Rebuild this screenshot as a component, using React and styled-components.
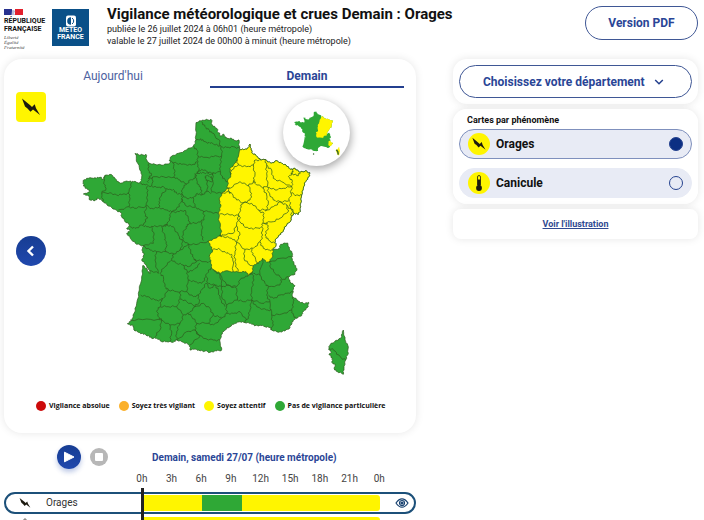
import { useState } from 'react'
import styled, { createGlobalStyle } from 'styled-components'

const GREEN = '#2fa836'
const YELLOW = '#fff500'

/* map outlines, three units to one pixel */
const COUNTRY = '348,38 360,32 375,31 393,28 397,45 410,55 415,68 423,78 430,72 440,85 455,85 465,92 477,90 479,118 495,118 503,115 510,102 513,120 518,130 530,138 543,150 555,148 573,160 590,152 605,160 618,165 630,178 645,175 660,187 675,183 689,188 687,200 677,215 670,235 665,255 662,280 660,300 655,313 643,310 635,318 633,330 620,345 610,360 602,373 585,390 588,405 578,420 598,415 602,403 623,399 628,417 638,433 635,443 642,460 650,475 645,493 625,500 630,515 645,527 638,540 638,560 655,573 670,580 686,577 682,593 670,605 665,617 648,625 635,637 630,653 615,663 595,667 575,660 570,653 555,650 540,645 525,648 512,640 495,638 480,635 465,640 450,650 435,660 423,675 420,695 425,720 410,723 390,727 375,723 360,723 345,717 330,720 328,705 310,697 290,690 280,697 260,695 245,695 230,685 215,685 205,677 190,673 175,667 162,660 160,647 142,641 155,630 162,610 170,580 178,540 185,500 188,467 200,475 208,490 210,487 205,475 195,463 185,450 192,435 185,420 190,407 170,403 155,390 140,370 150,362 140,355 150,345 135,335 125,320 123,308 105,298 85,288 70,275 55,265 45,272 30,270 25,258 10,252 30,245 20,235 10,228 9,212 25,205 45,203 60,202 70,208 75,196 95,194 105,205 120,220 135,215 150,213 160,215 180,218 185,205 183,185 173,160 165,130 180,136 198,133 200,150 207,160 225,163 250,166 270,158 268,150 275,138 295,130 320,120 340,108 348,90 347,60'
const EAST = '479,118 495,118 503,115 510,102 513,120 518,130 530,138 543,150 555,148 573,160 590,152 605,160 618,165 630,178 645,175 660,187 675,183 689,188 687,200 677,215 670,235 665,255 662,280 660,300 655,313 643,310 635,318 633,330 620,345 610,360 602,373 585,390 588,405 578,420 578,435 570,455 560,457 548,445 535,460 520,467 517,485 505,497 498,485 480,487 460,485 435,483 420,490 402,482 395,475 392,455 388,440 398,420 392,410 385,393 405,385 423,376 423,360 418,335 415,310 422,290 418,270 425,250 443,235 443,215 452,195 450,175 465,160 475,140'
const CORSICA = '790,660 795,690 803,705 805,730 797,750 792,775 790,793 772,785 763,777 765,765 755,757 758,745 748,735 753,725 746,717 750,705 765,693 782,685 787,665'

const BORDERS = [
  // north and Paris area
  '365,35 375,50 387,60 395,68 415,88 423,108',
  '347,92 362,86 375,95 390,100 410,103 423,110 440,112 460,110 479,115',
  '340,108 350,120 355,138 375,142 400,140 425,138 423,110',
  '425,138 422,160 420,180 428,205 443,215',
  '355,138 352,160 356,182 375,180 395,190 420,185',
  '270,152 290,160 310,162 335,165 352,155',
  '278,158 284,180 282,200 300,210 320,222 330,210 345,205 350,190 356,182',
  '350,188 365,190 380,188 400,195',
  '345,190 350,210 358,230 365,240 365,255 380,245 382,215 376,205 378,198 395,200 398,212 382,215',
  '400,187 398,212 395,245 425,250',
  '320,222 308,235 305,252 320,265 340,262 352,250 365,255',
  '340,262 345,290 360,300 385,305 415,310',
  '380,245 395,248',
  // Normandy, Brittany
  '207,160 205,180 215,195 205,205 205,218',
  '205,205 225,200 250,200 282,202',
  '180,218 195,225 215,228 235,232 250,230 265,240 280,238 290,250 305,252',
  '218,200 215,228',
  '157,215 147,245 150,265 147,290',
  '75,196 72,215 78,235 65,250 70,275',
  '65,250 90,248 110,255 130,252 147,250',
  '202,228 203,255 198,288',
  '115,300 147,290 170,295 198,288 215,295 237,292 260,300 275,305 298,290 305,265 305,252',
  '258,238 245,255 237,275 237,292',
  '198,290 195,310 202,325 190,345',
  '275,305 268,325 262,345 250,350',
  '150,350 165,355 185,345 200,350 220,350 235,348 262,345 280,350 295,375 308,395',
  '275,305 298,305 315,300 325,325 330,340 318,350 310,370 308,390',
  '305,265 315,285 345,292',
  '372,303 372,330 350,340 328,340',
  '366,334 365,370 370,392',
  '308,390 325,402 355,402 385,393',
  // west and south-west
  '215,350 222,375 220,400 190,407 210,420 230,425 258,425',
  '245,349 255,380 258,400 258,425 282,432 300,420 308,395',
  '230,425 225,450 235,490 208,482',
  '282,432 275,450 255,470 240,490 250,500 255,530 265,540',
  '300,420 325,402 332,425 342,445 350,455 325,470 310,465 290,460 275,450',
  '342,448 375,455 392,455',
  '310,465 322,485 325,510 320,545 290,545 265,540 250,565 245,570',
  '322,485 340,480 360,460',
  '325,510 345,515 365,520 378,500 385,480 395,475',
  '182,555 205,560 225,570 245,570 240,590 232,600 235,620 245,630',
  '150,630 200,627 245,630 270,645 300,640 310,615 290,590 265,590 240,590',
  '290,590 300,565 300,545',
  '245,630 240,660 225,680',
  '270,645 275,670 270,695',
  '300,640 290,665 290,690 320,665 345,660 360,680 330,705',
  '310,615 325,610 345,590 320,575 300,567',
  '320,545 340,560 355,555 358,575 345,590 370,580 390,595 400,615 385,640 350,640 335,620 325,610',
  '355,555 365,540 378,520 390,535 405,525 415,540 420,565 435,590',
  '350,640 345,660 370,685 400,690 420,690',
  '385,640 400,645 425,625 440,610 460,610 480,605 500,630',
  '400,615 425,622',
  '378,500 385,520 405,525 425,530 420,495 402,482',
  '425,530 445,525 470,535 472,570 440,585 425,560 425,530',
  '440,585 440,610',
  // south-east
  '420,492 440,525 470,530 480,510 497,498 517,490',
  '517,485 522,510 515,540 515,570 490,575 472,570',
  '520,490 540,495 555,520 565,530 560,555 570,575 545,580 515,570 510,600 505,620 495,638',
  '548,445 540,495',
  '565,530 600,525 605,505 585,490 570,470 570,455 600,445 635,440',
  '605,510 625,500',
  '565,555 580,565 600,555 620,550 638,545',
  '570,575 575,615 605,612 635,600 640,580 638,560',
  '515,570 530,590 560,600 575,600',
  '575,615 578,640 575,660',
  '635,600 640,615 648,625',
  // yellow departments
  '470,150 475,165 500,170 520,165 525,150 543,150',
  '475,165 455,180 450,195',
  '520,165 525,195 520,215 505,228 480,215 450,235 443,235',
  '555,148 560,165 560,190 563,225 550,235 525,220 520,212',
  '560,165 575,180 580,205 605,215 635,230 637,215 625,200 640,185 635,178',
  '632,190 650,197 662,187',
  '635,230 610,235 585,240 563,232 565,245 580,270 600,275 628,272 633,250 635,230',
  '633,250 650,255 665,255',
  '628,275 632,290 643,310',
  '425,250 445,245 455,250 470,270 490,278 510,270 515,250 505,228',
  '550,235 560,255 565,280 560,300 535,300 515,280 490,278 480,295 477,318 450,315 418,312',
  '445,235 450,250',
  '535,300 552,310 550,335 545,350 520,358 495,352 480,335 477,318 470,345 460,370 430,375 418,376',
  '555,303 580,290 600,275 620,285 625,305 600,325 580,335 550,340',
  '620,285 635,300 635,318',
  '550,340 562,340 565,355 555,375 565,390 585,400',
  '470,347 480,375 470,397 495,418 520,415 540,395 548,375 545,350',
  '470,397 455,385 430,380 418,376',
  '398,420 415,415 440,430 455,433 458,450 460,485',
  '470,397 465,425 465,455 475,485',
  '495,418 492,445 510,465 520,467',
  '515,415 518,435 535,460',
  '540,395 550,415 565,420 578,420',
  '748,715 765,723 780,740 797,750',
]

// splits each segment in four with a small alternating offset, so that limits look surveyed
const rugged = (points, size) => {
  const list = points.split(' ').map((p) => p.split(',').map(Number))
  const out = []
  for (let i = 0; i < list.length - 1; i++) {
    const [x1, y1] = list[i]
    const [x2, y2] = list[i + 1]
    const len = Math.hypot(x2 - x1, y2 - y1) || 1
    out.push([x1, y1])
    for (let k = 1; k < 4; k++) {
      const side = ((x1 + y2 + k * 7) % 5) - 2
      const off = (side * size) / 2
      out.push([
        Math.round(x1 + ((x2 - x1) * k) / 4 - ((y2 - y1) / len) * off),
        Math.round(y1 + ((y2 - y1) * k) / 4 + ((x2 - x1) / len) * off),
      ])
    }
  }
  out.push(list[list.length - 1])
  return out.join(' ')
}

const FranceMap = () => (
  <MapSvg viewBox="0 0 810 810" role="img" aria-label="Carte de vigilance">
    <g stroke="#2f5f1f" strokeWidth="2.200" strokeLinejoin="round">
      <polygon points={rugged(COUNTRY, 2)} fill={GREEN} />
      <polygon points={rugged(EAST, 2)} fill={YELLOW} />
      <polygon points={rugged(CORSICA, 2)} fill={GREEN} />
      {BORDERS.map((b) => (
        <polyline key={b} points={rugged(b, 3)} fill="none" />
      ))}
    </g>
  </MapSvg>
)

const MiniMap = () => (
  <svg width="46" height="46" viewBox="0 0 810 810" aria-hidden="true">
    <polygon points={COUNTRY} fill={GREEN} />
    <polygon points={EAST} fill={YELLOW} />
    <polygon points="610,545 638,540 655,573 686,577 665,617 635,640 605,620" fill={YELLOW} />
    <polygon points={CORSICA} fill={YELLOW} stroke={YELLOW} strokeWidth="12" />
    <path d="M745 700l25 30 10 55" stroke="#35642a" strokeWidth="26" fill="none" />
    <circle cx="345" cy="775" r="13" fill="#35642a" />
  </svg>
)

const Bolt = ({ size }) => (
  <svg width={size} height={size} viewBox="0 0 30 30" aria-hidden="true">
    <path d="M6 6.500l8.500 7 1.500 1.500 2.700-2.700 1.300 4L24 23l-7-5.500-2.500 2.300-3-3.300-2.500-2z" fill="#1c1a10" />
  </svg>
)

const Thermometer = ({ size }) => (
  <svg width={size} height={size} viewBox="0 0 22 22" aria-hidden="true">
    <path d="M9.500 13V5a1.500 1.500 0 0 1 3 0v8" fill="none" stroke="#1c1a10" strokeWidth="0.800" />
    <path d="M9.600 7.500h2.800v7H9.600z" fill="#1c1a10" />
    <circle cx="11" cy="16" r="2.900" fill="#1c1a10" />
  </svg>
)

const Eye = () => (
  <svg width="14" height="12" viewBox="0 0 14 12" fill="none" stroke="#17416f" strokeWidth="1.200" aria-hidden="true">
    <path d="M1 6c2-3 4-4.200 6-4.200S11 3 13 6c-2 3-4 4.200-6 4.200S3 9 1 6z" />
    <circle cx="7" cy="6" r="2.500" />
    <circle cx="7" cy="6" r="1" fill="#17416f" />
  </svg>
)

const levels = [
  ['Vigilance absolue', '#cc0a0a'],
  ['Soyez très vigilant', '#fbb02a'],
  ['Soyez attentif', YELLOW],
  ['Pas de vigilance particulière', GREEN],
]
const hours = ['0h', '3h', '6h', '9h', '12h', '15h', '18h', '21h', '0h']

const App = () => {
  const [day, setDay] = useState('Demain')
  const [risk, setRisk] = useState('Orages')

  return (
    <>
      <GlobalStyle />
      <Header>
        <Republic>
          <svg width="19" height="6" viewBox="0 0 19 6" aria-hidden="true">
            <path d="M0 0h8v6H0z" fill="#28318f" />
            <path d="M11 0h8v6h-8z" fill="#e3202c" />
            <path d="M8 1.500c1.500-1 3 0 3.200 1.300L10 4l1 2H7.500z" fill="#b9bdd8" />
          </svg>
          <strong>RÉPUBLIQUE<br />FRANÇAISE</strong>
          <em>Liberté<br />Égalité<br />Fraternité</em>
        </Republic>
        <MeteoLogo>
          <svg width="12" height="12" viewBox="0 0 12 12" aria-hidden="true">
            <rect x="1" y="0.500" width="10" height="11" rx="2" fill="#fff" />
            <path d="M6 2.200a3.800 3.800 0 0 0 0 7.600z" fill="#0a5088" />
            <path d="M7 3a3.500 3.500 0 0 1 0 6" fill="none" stroke="#0a5088" />
          </svg>
          METEO<br />FRANCE
        </MeteoLogo>
        <Titles>
          <h1>Vigilance météorologique et crues Demain : Orages</h1>
          <p>publiée le 26 juillet 2024 à 06h01 (heure métropole)</p>
          <p>valable le 27 juillet 2024 de 00h00 à minuit (heure métropole)</p>
        </Titles>
        <PdfButton type="button">Version PDF</PdfButton>
      </Header>

      <Layout>
        <main>
          <MapCard>
            <Tabs>
              {["Aujourd'hui", 'Demain'].map((name) => (
                <Tab key={name} type="button" $active={day === name} onClick={() => setDay(name)}>
                  {name}
                </Tab>
              ))}
            </Tabs>
            <MapArea>
              <Side>
                <RiskBadge><Bolt size={30} /></RiskBadge>
                <PrevButton type="button" aria-label="Carte précédente">
                  <svg width="14" height="14" viewBox="0 0 14 14" aria-hidden="true">
                    <path d="M9 2.500L4.500 7 9 11.500" fill="none" stroke="#fff" strokeWidth="2.400" />
                  </svg>
                </PrevButton>
              </Side>
              <FranceMap />
              <MiniButton type="button" aria-label="Vue générale"><MiniMap /></MiniButton>
            </MapArea>
            <Legend>
              {levels.map(([label, color]) => (
                <li key={label}><Dot $color={color} />{label}</li>
              ))}
            </Legend>
          </MapCard>

          <PlayerBar>
            <PlayButton type="button" aria-label="Lecture">
              <svg width="12" height="12" viewBox="0 0 12 12" aria-hidden="true">
                <path d="M1.500 1.200v9.600L11 6z" fill="#fff" stroke="#fff" strokeLinejoin="round" />
              </svg>
            </PlayButton>
            <StopButton type="button" aria-label="Arrêt" />
            <DayTitle>Demain, samedi 27/07 (heure métropole)</DayTitle>
          </PlayerBar>
          <Hours>
            {hours.map((h, i) => <span key={i}>{h}</span>)}
          </Hours>
          <Timeline>
            <Row $selected>
              <Bolt size={18} />
              <span>Orages</span>
              <Bar>
                <Slot $hours={6} $color={YELLOW} />
                <Slot $hours={4} $color={GREEN} />
                <Slot $hours={14} $color={YELLOW} />
              </Bar>
              <EyeButton type="button" aria-label="Afficher les orages"><Eye /></EyeButton>
            </Row>
            <Row>
              <Thermometer size={18} />
              <span>Canicule</span>
              <Bar><Slot $hours={24} $color={YELLOW} /></Bar>
              <EyeButton type="button" aria-label="Afficher la canicule"><Eye /></EyeButton>
            </Row>
            <Cursor />
          </Timeline>
        </main>

        <Aside>
          <Panel>
            <SelectWrap>
              <select aria-label="Département" defaultValue="">
                <option value="">Choisissez votre département</option>
                <option>Ain</option>
                <option>Aisne</option>
                <option>Allier</option>
              </select>
              <svg width="10" height="8" viewBox="0 0 10 8" aria-hidden="true">
                <path d="M1.200 2L5 5.800 8.800 2" fill="none" stroke="#24408e" strokeWidth="1.500" />
              </svg>
            </SelectWrap>
          </Panel>
          <Panel as="fieldset">
            <Legende>Cartes par phénomène</Legende>
            <Choices>
              {[['Orages', Bolt], ['Canicule', Thermometer]].map(([name, Icon]) => (
                <Choice key={name} $active={risk === name}>
                  <RoundIcon><Icon size={22} /></RoundIcon>
                  {name}
                  <input type="radio" name="risk" checked={risk === name} onChange={() => setRisk(name)} />
                </Choice>
              ))}
            </Choices>
          </Panel>
          <LinkPanel>
            <a href="#illustration">Voir l'illustration</a>
          </LinkPanel>
        </Aside>
      </Layout>
    </>
  )
}
export default App

const GlobalStyle = createGlobalStyle`
  * {
    box-sizing: border-box;
  }
  html {
    scrollbar-width: none;
  }
  body {
    margin: 0;
    background: #fff;
    color: #111;
    font-family: Roboto, "Liberation Sans", sans-serif;
  }
  button, select {
    font-family: inherit;
    cursor: pointer;
  }
  h1, p, ul {
    margin: 0;
    padding: 0;
  }
`
const Header = styled.header`
  display: flex;
  align-items: flex-start;
  padding: 6px 6px 0 4px;
  height: 59px;
`
const Republic = styled.div`
  display: flex;
  flex-direction: column;
  gap: 2px;
  width: 48px;
  padding-top: 3px;

  strong {
    font-size: 7px;
    line-height: 8px;
    font-weight: 700;
  }
  em {
    font-family: "Liberation Serif", serif;
    font-size: 5px;
    line-height: 5px;
    color: #444;
  }
`
const MeteoLogo = styled.div`
  display: flex;
  flex-direction: column;
  align-items: center;
  width: 37px;
  height: 37px;
  margin-top: 3px;
  padding-top: 6px;
  background: #0a5088;
  color: #fff;
  font-size: 7px;
  line-height: 7px;
  font-weight: 700;
  text-align: center;
`
const Titles = styled.div`
  flex: 1;
  margin-left: 18px;

  h1 {
    font-size: 15px;
    line-height: 17px;
    font-weight: 700;
  }
  p {
    font-size: 9px;
    line-height: 12px;
    color: #222;
  }
`
const PillButton = styled.button`
  border: 1px solid #3f5795;
  border-radius: 17px;
  background: #fff;
  color: #2a4596;
  font-weight: 700;
`
const PdfButton = styled(PillButton)`
  width: 113px;
  height: 34px;
  font-size: 12px;
`
const Layout = styled.div`
  display: grid;
  grid-template-columns: minmax(0, 1fr) 245px;
  gap: 37px;
  align-items: start;
  padding: 0 6px 12px 4px;
`
const MapCard = styled.section`
  padding: 6px 12px 21px;
  border-radius: 18px;
  background: #fff;
  box-shadow: 0 0 8px rgba(0, 0, 0, 0.1);
`
const Tabs = styled.div`
  display: flex;
`
const Tab = styled.button`
  flex: 1;
  height: 23px;
  padding: 0;
  border: 0;
  border-bottom: 2px solid ${(p) => (p.$active ? '#233f8f' : 'transparent')};
  background: none;
  color: ${(p) => (p.$active ? '#2a4596' : '#4d629f')};
  font-size: 12px;
  font-weight: ${(p) => (p.$active ? 700 : 400)};
`
const MapArea = styled.div`
  position: relative;
  display: grid;
  grid-template-columns: 30px 270px;
  column-gap: 34px;
  padding-top: 4px;
`
const Side = styled.div`
  display: flex;
  flex-direction: column;
  gap: 114px;
`
const RiskBadge = styled.div`
  height: 30px;
  border-radius: 4px;
  background: #fff500;
`
const RoundButton = styled.button`
  display: grid;
  place-items: center;
  padding: 0;
  border: 0;
  border-radius: 50%;
  background: linear-gradient(#173d93, #2048ad);
`
const PrevButton = styled(RoundButton)`
  width: 30px;
  height: 30px;
`
const MapSvg = styled.svg`
  width: 270px;
  height: 270px;
  margin-top: 18px;
`
const MiniButton = styled.button`
  position: absolute;
  top: 11px;
  left: 267px;
  display: grid;
  place-items: center;
  width: 67px;
  height: 67px;
  padding: 0;
  border: 0;
  border-radius: 50%;
  background: #fff;
  box-shadow: 1px 3px 9px rgba(0, 0, 0, 0.35);
`
const Legend = styled.ul`
  display: flex;
  gap: 9px;
  padding: 20px 0 0 20px;
  list-style: none;
  font-family: "Open Sans", sans-serif;
  font-size: 7px;
  line-height: 12px;
  font-weight: 700;
  white-space: nowrap;

  li {
    display: flex;
    align-items: center;
    gap: 3px;
  }
`
const Dot = styled.span`
  width: 10px;
  height: 10px;
  border-radius: 50%;
  background: ${(p) => p.$color};
`
const PlayerBar = styled.div`
  display: flex;
  align-items: center;
  margin-top: 12px;
  padding-left: 53px;
`
const PlayButton = styled(RoundButton)`
  width: 24px;
  height: 24px;
  box-shadow: 0 3px 5px rgba(32, 72, 173, 0.3);
`
const StopButton = styled(RoundButton)`
  width: 18px;
  height: 18px;
  margin-left: 9px;
  background: #b7b7b7;

  &::after {
    content: '';
    width: 8px;
    height: 8px;
    border-radius: 1px;
    background: #fff;
  }
`
const DayTitle = styled.p`
  margin-left: 44px;
  color: #2a4596;
  font-size: 10px;
  font-weight: 700;
`
const Hours = styled.div`
  display: flex;
  justify-content: space-between;
  margin: 3px 22px 0 123px;
  color: #444;
  font-size: 10px;
  line-height: 14px;

  span {
    width: 30px;
    text-align: center;
  }
`
const Timeline = styled.div`
  position: relative;
  padding-top: 6px;
`
const Row = styled.div`
  display: grid;
  grid-template-columns: 18px 109px 1fr 14px;
  align-items: center;
  height: 22px;
  padding: 0 5px 0 10px;
  border: 2px solid ${(p) => (p.$selected ? '#1c5079' : 'transparent')};
  border-radius: 11px;
  font-size: 10px;
  line-height: 10px;

  > span {
    padding-left: 12px;
    color: #333;
  }
`
const Bar = styled.div`
  display: flex;
  height: 16px;
  margin-right: 15px;
  border-radius: 0 3px 3px 0;
  overflow: hidden;
`
const Slot = styled.div`
  flex: ${(p) => p.$hours};
  background: ${(p) => p.$color};
`
const EyeButton = styled.button`
  display: grid;
  padding: 0;
  border: 0;
  background: none;
`
const Cursor = styled.div`
  position: absolute;
  top: 2px;
  bottom: 0;
  left: 137px;
  width: 3px;
  background: #222;
`
const Aside = styled.aside`
  display: grid;
  gap: 5px;
`
const Panel = styled.section`
  min-width: 0;
  margin: 0;
  padding: 6px;
  border: 0;
  border-radius: 14px;
  background: #fff;
  box-shadow: 0 0 8px rgba(0, 0, 0, 0.1);
`
const SelectWrap = styled.div`
  position: relative;

  select {
    appearance: none;
    width: 100%;
    height: 33px;
    padding: 0 40px 0 23px;
    border: 1px solid #3f5795;
    border-radius: 17px;
    background: #fff;
    color: #2a4596;
    font-size: 12px;
    font-weight: 700;
  }
  svg {
    position: absolute;
    top: 13px;
    right: 28px;
    pointer-events: none;
  }
`
const Legende = styled.legend`
  float: left;
  width: 100%;
  padding: 0 8px;
  font-size: 9px;
  line-height: 10px;
  font-weight: 700;
`
const Choices = styled.div`
  display: grid;
  gap: 9px;
  clear: both;
  padding-top: 4px;
`
const Choice = styled.label`
  display: flex;
  align-items: center;
  height: 30px;
  padding: 0 8px;
  border: 1px solid ${(p) => (p.$active ? '#7f90bd' : '#e8ebf5')};
  border-radius: 15px;
  background: #e8ebf5;
  font-size: 12px;
  font-weight: 700;

  input {
    appearance: none;
    width: 14px;
    height: 14px;
    margin: 0 0 0 auto;
    border: 1px solid #26438f;
    border-radius: 50%;
    background: ${(p) => (p.$active ? '#0c2f83' : 'transparent')};
  }
`
const RoundIcon = styled.span`
  width: 22px;
  height: 22px;
  margin-right: 6px;
  border-radius: 50%;
  background: #fff500;
`
const LinkPanel = styled(Panel)`
  border-radius: 8px;
  text-align: center;
  font-size: 9px;
  line-height: 18px;

  a {
    color: #2f4a92;
    font-weight: 700;
  }
`
